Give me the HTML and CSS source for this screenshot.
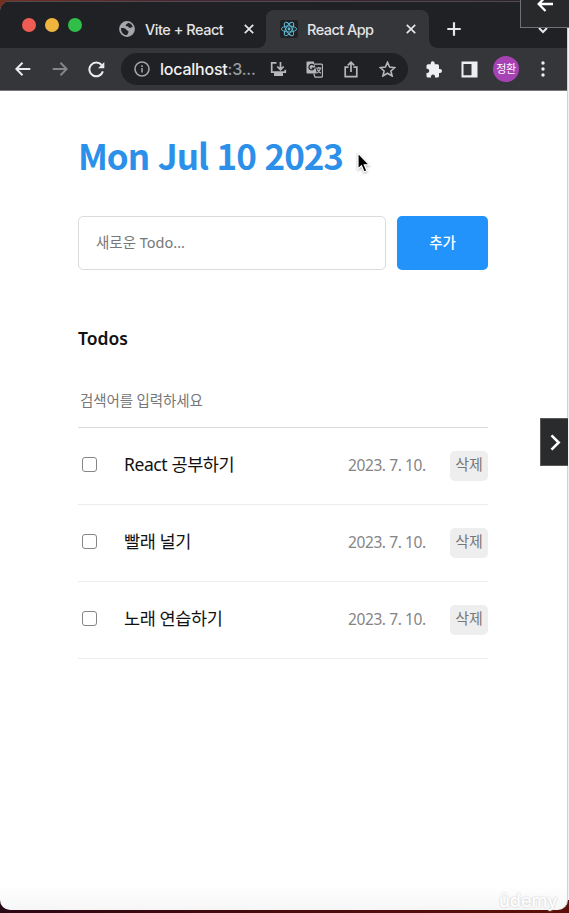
FILE: index.html
```html
<!DOCTYPE html>
<html lang="ko">
<head>
<meta charset="utf-8">
<title>React App</title>
<link rel="stylesheet" href="styles.css">
</head>
<body>
<div class="window">
  <header class="chrome">
    <div class="tabstrip">
      <div class="lights"><i class="light red"></i><i class="light yellow"></i><i class="light green"></i></div>
      <div class="tab">
        <svg class="globe" width="16" height="16" viewBox="0 0 16 16"><circle cx="8" cy="8" r="7.900" fill="#a4a7ab"/><path d="M2 7.200c2.300-.3 4.900.1 5.300 1.500.3 1.100 1.600.4 2.200 1.700.4 1.200-1 1.900-1.300 3.700C4.800 14.300 1.800 11.500 2 7.200zM8.900 1.800c-.2 1.500-1.500 1.200-2.100 2.100-.5.900.5 1.400 1.600 1.400 1.200 0 1.100 1.600 2.400 1.700 1.300 0 1.700-1.100 3-.9-.5-2.300-2.600-4.100-4.900-4.300z" fill="#202124"/></svg>
        <span class="tab-title">Vite + React</span>
        <svg class="close" width="10" height="10" viewBox="0 0 10 10"><path d="M.8.8l8.400 8.400M9.200.8L.8 9.200"/></svg>
      </div>
      <div class="tab active">
        <svg class="reactlogo" width="18" height="18" viewBox="0 0 18 18"><rect width="18" height="18" rx="2" fill="#202124"/><g fill="none" stroke="#5ab9d2" stroke-width=".9"><ellipse cx="9" cy="9" rx="7.600" ry="3"/><ellipse cx="9" cy="9" rx="7.600" ry="3" transform="rotate(60 9 9)"/><ellipse cx="9" cy="9" rx="7.600" ry="3" transform="rotate(120 9 9)"/></g><circle cx="9" cy="9" r="1.400" fill="#5ab9d2"/></svg>
        <span class="tab-title">React App</span>
        <svg class="close" width="10" height="10" viewBox="0 0 10 10"><path d="M.8.8l8.400 8.400M9.200.8L.8 9.200"/></svg>
      </div>
      <svg class="plus" width="14" height="14" viewBox="0 0 14 14"><path d="M7 .3v13.400M.3 7h13.400"/></svg>
      <svg class="chevron" width="10" height="7" viewBox="0 0 10 7"><path d="M1 1l4 4 4-4"/></svg>
    </div>
    <div class="toolbar">
      <svg class="ic back" width="16" height="14" viewBox="0 0 16 14"><path d="M15.300 7H1.500M7.500.8L1.300 7l6.200 6.200"/></svg>
      <svg class="ic forward" width="16" height="14" viewBox="0 0 16 14"><path d="M.7 7h13.800M8.500.8L14.700 7l-6.200 6.200"/></svg>
      <svg class="ic reload" width="17" height="17" viewBox="0 0 17 17"><path d="M14.900 10.400A6.900 6.900 0 1 1 13.600 4"/><path class="fill" d="M16.300 1v6.200h-6.200z"/></svg>
      <div class="address">
        <svg class="info" width="16" height="16" viewBox="0 0 16 16"><circle cx="8" cy="8" r="7"/><path d="M8 7v4.500M8 4.300v1.700"/></svg>
        <span class="url">localhost<span class="port">:3...</span></span>
        <svg class="aic install" width="17" height="15" viewBox="0 0 17 15"><path d="M6.500.9H1.700v9.300h13.600V7.800M10.500 0v7.500M7.300 4.500l3.200 3.200 3.200-3.200"/><path class="fill" d="M4 11h9v3H4z"/></svg>
        <svg class="aic translate" width="17" height="17" viewBox="0 0 17 17"><path class="fill" d="M1.500.5h6.300l3.100 12H1.500a1 1 0 0 1-1-1v-10a1 1 0 0 1 1-1z"/><path class="page" d="M8.400 3.200h7.100a1 1 0 0 1 1 1v10.900a1 1 0 0 1-1 1H9l-1.200-3.300"/><path class="gmark" d="M7.800 4.500a2.700 2.700 0 1 0 .4 2.600H5.700"/><path class="page" d="M10.300 7.200h5M12.800 5.900v1.300M14.500 7.200c-.3 2-1.500 3.600-3.300 4.700M11.200 8.300c.8 1.900 2 3.200 3.800 4"/></svg>
        <svg class="aic share" width="14" height="17" viewBox="0 0 14 17"><path d="M4.500 6.200H1.200v9.500h11.600V6.200H9.500M7 11V1.400M3.800 4.300L7 1.200l3.200 3.100"/></svg>
        <svg class="aic star" width="17" height="16" viewBox="0 0 17 16"><path d="M8.500 1.300l2.100 4.800 5.200.5-3.900 3.400 1.200 5-4.600-2.700L3.900 15l1.200-5-3.900-3.400 5.200-.5z"/></svg>
      </div>
      <svg class="puzzle" width="16" height="17" viewBox="0 0 16 17"><path d="M14 8h-1V4.800a1.500 1.500 0 0 0-1.500-1.500H8.700v-1a2 2 0 0 0-4 0v1H2A1.500 1.500 0 0 0 .5 4.800v2.900h1a2.200 2.200 0 0 1 0 4.300h-1v3A1.500 1.500 0 0 0 2 16.500h3v-1a2 2 0 0 1 4 0v1h2.500A1.500 1.500 0 0 0 13 15v-3h1a2 2 0 0 0 0-4z"/></svg>
      <svg class="panel" width="17" height="17" viewBox="0 0 17 17"><path fill-rule="evenodd" d="M.5.5h16v16H.5zM2.500 3v11.300h8V3z"/></svg>
      <span class="avatar">정환</span>
      <svg class="dots" width="4" height="16" viewBox="0 0 4 16"><circle cx="2" cy="2" r="1.700"/><circle cx="2" cy="8" r="1.700"/><circle cx="2" cy="14" r="1.700"/></svg>
    </div>
  </header>

  <main class="app">
    <h1 class="date">Mon Jul 10 2023</h1>
    <form class="editor">
      <div class="field">새로운 Todo...</div>
      <button class="add" type="button">추가</button>
    </form>
    <h2 class="heading">Todos</h2>
    <div class="search">검색어를 입력하세요</div>
    <ul class="list">
      <li class="item"><i class="check"></i><span class="content">React 공부하기</span><span class="day">2023. 7. 10.</span><button class="delete" type="button">삭제</button></li>
      <li class="item"><i class="check"></i><span class="content">빨래 널기</span><span class="day">2023. 7. 10.</span><button class="delete" type="button">삭제</button></li>
      <li class="item"><i class="check"></i><span class="content">노래 연습하기</span><span class="day">2023. 7. 10.</span><button class="delete" type="button">삭제</button></li>
    </ul>
  </main>
</div>

<svg class="cursor" width="16" height="24" viewBox="0 0 16 24"><path d="M2 1v16l3.500-3.200 2.600 6.200 2.800-1.200-2.600-6h5z" fill="#000" stroke="#fff" stroke-width="1.200"/></svg>
<div class="overlay-back"><svg width="17" height="16" viewBox="0 0 17 16"><path d="M16 8H2M8.500 1L1.700 8l6.800 7"/></svg></div>
<div class="overlay-next"><svg width="11" height="17" viewBox="0 0 11 17"><path d="M1.500 1.300l7.200 7.200-7.200 7.200"/></svg></div>
<div class="watermark">ûdemy</div>
</body>
</html>
```
FILE: styles.css
```css
* { box-sizing: border-box; }
body {
  margin: 0;
  height: 913px;
  overflow: hidden;
  position: relative;
  padding-top: 1px;
  background:
    linear-gradient(90deg, #74301f, #4a2530 30%, #35262f 75%, #2c2229) 0 0 / 100% 12px no-repeat,
    linear-gradient(#f1f1f1, #f1f1f1) 568px 28px / 1px 872px no-repeat,
    linear-gradient(90deg, #2a0716, #4b0b0c 55%, #5c1009);
  font-family: "Noto Sans", "Noto Sans CJK KR", sans-serif;
}
.window {
  width: 568px;
  height: 909px;
  overflow: hidden;
  border-radius: 10px;
  border-right: 1px solid #d2d2d2;
  background: linear-gradient(#fff 0 884px, #f8f8f8 905px, #f5f5f5);
}
.chrome { height: 90px; background: #35363a; border-bottom: 1px solid #77787b; }
.tabstrip {
  height: 47px;
  display: flex;
  background: #202124;
  border-top: 1px solid #4d4a50;
  padding-left: 22px;
}
.lights { display: flex; gap: 9px; padding-top: 16px; width: 83px; }
.light { width: 14px; height: 14px; border-radius: 50%; }
.red { background: #ee5c54; }
.yellow { background: #f0b53e; }
.green { background: #30bd48; }
.tab {
  width: 161px;
  height: 38px;
  margin-top: 8px;
  display: flex;
  align-items: center;
  padding: 0 12px 0 14px;
  color: #e3e4e6;
  font: 500 14.500px Inter, sans-serif;
}
.tab-title { flex: 1; margin-left: 10px; white-space: nowrap; letter-spacing: -.48px; }
.active {
  width: 163px;
  background: #35363a;
  border-radius: 8px 8px 0 0;
  position: relative;
  padding-right: 13px;
}
.active .tab-title { letter-spacing: -.55px; }
.active::before, .active::after {
  content: "";
  position: absolute;
  bottom: 0;
  width: 8px;
  height: 8px;
}
.active::before { left: -8px; background: radial-gradient(circle at 0 0, transparent 7.500px, #35363a 8px); }
.active::after { right: -8px; background: radial-gradient(circle at 100% 0, transparent 7.500px, #35363a 8px); }
svg { flex: none; }
.close, .plus, .chevron { fill: none; stroke: #e6e7e9; stroke-width: 1.700; }
.reactlogo { margin-right: -1px; }
.plus { margin: 20px 0 0 18px; stroke-width: 2.200; }
.chevron { margin: 25px 0 0 77px; stroke-width: 2; }
.toolbar { height: 42px; display: flex; align-items: center; padding-left: 15px; }
.ic { fill: none; stroke: #eaebed; stroke-width: 2; }
.ic .fill { fill: #eaebed; stroke: none; }
.ic.forward { stroke: #85868a; margin-left: 21px; }
.reload { margin-left: 20px; }
.address {
  width: 287px;
  height: 32px;
  margin-left: 16px;
  border-radius: 16px;
  background: #202124;
  display: flex;
  align-items: center;
  padding-left: 13px;
}
.info { fill: none; stroke: #a1a3a7; stroke-width: 1.600; }
.url { width: 98px; margin-left: 10px; color: #f1f1f3; font: 500 16px Inter, sans-serif; letter-spacing: -.22px; white-space: nowrap; }
.port { color: #9b9da1; }
.aic { fill: none; stroke: #b5b7ba; stroke-width: 1.700; }
.aic .fill { fill: #b5b7ba; stroke: none; }
.install { margin-left: 12px; }
.translate { margin-left: 19px; }
.translate .page { stroke-width: 1.200; }
.translate .gmark { stroke: #202124; stroke-width: 1.300; }
.share { margin-left: 21px; }
.aic.star { margin-left: 21px; stroke-width: 1.600; }
.puzzle { margin-left: 18px; fill: #eeeff1; }
.panel { margin-left: 19px; fill: #eeeff1; }
.avatar {
  width: 26px;
  height: 26px;
  margin-left: 15px;
  border-radius: 50%;
  background: #a742b5;
  color: #fff;
  font: 11px/25px "Noto Sans CJK KR", sans-serif;
  text-align: center;
  letter-spacing: -.3px;
}
.dots { margin-left: 22px; fill: #eeeff1; }
.app { margin: 0 80px 0 78px; width: 410px; }
.date {
  margin: 0;
  padding-top: 39px;
  height: 125px;
  color: #2c90ea;
  font-family: "Noto Sans CJK KR", sans-serif;
  font-size: 35px;
  font-weight: 700;
  line-height: 50px;
  letter-spacing: -1.050px;
  white-space: nowrap;
}
.editor { display: flex; gap: 11px; height: 54px; }
.field {
  width: 308px;
  border: 1px solid #dcdcdc;
  border-radius: 5px;
  padding-left: 17px;
  line-height: 51px;
  font-size: 14.500px;
  color: #777;
}
.add {
  flex: 1;
  border: 0;
  padding: 0 0 4px;
  border-radius: 5px;
  background: #2193fb;
  color: #fff;
  font: 500 14.500px "Noto Sans CJK KR", sans-serif;
}
.heading { margin: 54px 0 0; font-size: 17.500px; line-height: 28px; font-weight: 600; color: #111; }
.search {
  height: 56px;
  margin-top: 20px;
  padding: 17px 0 0 2px;
  border-bottom: 1px solid #d9d9d9;
  font-size: 14.500px;
  letter-spacing: -.12px;
  line-height: 22px;
  color: #777;
}
.list { margin: 0; padding: 0; list-style: none; }
.item { height: 77px; display: flex; align-items: center; border-bottom: 1px solid #ededed; padding-bottom: 3px; }
.check { width: 15px; height: 15px; margin-left: 4px; border: 1px solid #858585; border-radius: 3px; flex: none; }
.content { flex: 1; margin: 0 0 1px 27px; font-size: 17.500px; letter-spacing: -.4px; line-height: 26px; color: #111; white-space: nowrap; }
.day { width: 78px; font-size: 15.500px; letter-spacing: -.4px; color: #858585; white-space: nowrap; }
.delete {
  width: 38px;
  height: 30px;
  margin: 3px 0 0 24px;
  padding: 0 0 5px;
  border: 0;
  border-radius: 5px;
  background: #eee;
  color: #777;
  font: 15px "Noto Sans CJK KR", sans-serif;
}
.cursor { position: absolute; left: 356px; top: 152px; filter: drop-shadow(0 1px 1px #0005); }
.overlay-back {
  position: absolute;
  right: 0;
  top: -1px;
  width: 49px;
  height: 29px;
  border: 1px solid #707274;
  border-right: 0;
  background: #28292b;
  padding: 0 0 0 16px;
}
.overlay-back svg, .overlay-next svg { display: block; fill: none; stroke: #fff; stroke-width: 2.300; }
.overlay-back svg { margin-top: -4px; }
.overlay-next {
  position: absolute;
  right: 1px;
  top: 418px;
  width: 28px;
  height: 48px;
  border: 1px solid #575b5c;
  border-right: 0;
  background: #2a2b2d;
  padding: 15px 0 0 9px;
}
.overlay-next svg { stroke-width: 2.600; }
.watermark {
  position: absolute;
  left: 499px;
  top: 889px;
  color: #fff;
  font: 500 18px/24px Inter, sans-serif;
  text-shadow: 0 0 2px #bbb;
}
```
